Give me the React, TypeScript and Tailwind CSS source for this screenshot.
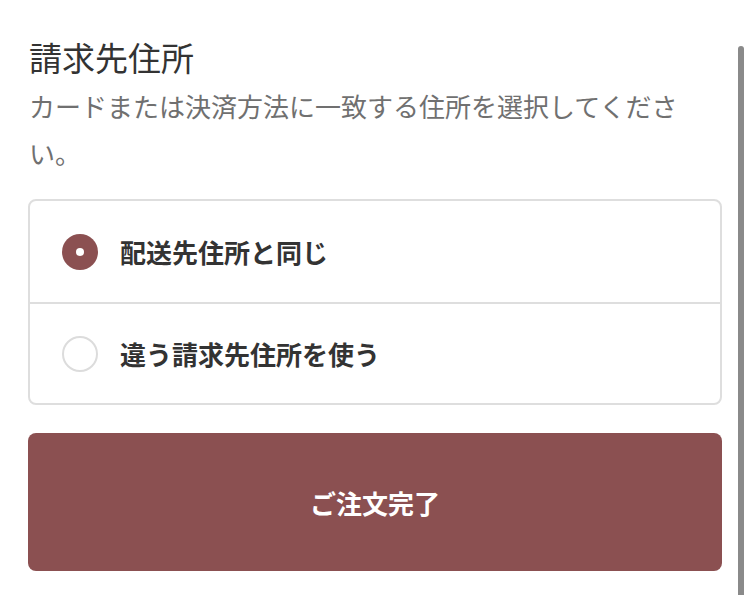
import { useState } from 'react'

const options = [
  { id: 'same', label: '配送先住所と同じ' },
  { id: 'different', label: '違う請求先住所を使う' },
]

export default function App() {
  const [selected, setSelected] = useState('same')

  return (
    <div
      className="relative h-[595px] w-[750px] overflow-hidden bg-white"
      style={{ fontFamily: '"Noto Sans CJK JP", "Noto Sans", sans-serif' }}
    >
      <div className="w-[722px] pl-[28px] pt-[33px]">
        {/* Billing address */}
        <h2 className="pl-[1px] text-[33px] leading-[48px] font-normal text-[#333]">請求先住所</h2>
        <p className="mt-[1px] w-[668px] pl-[1px] text-[26px] leading-[47px] text-[#707070]">
          カードまたは決済方法に一致する住所を選択してください。
        </p>

        <div className="mt-[23px] rounded-[8px] border-2 border-[#dedede]">
          {options.map((opt, i) => (
            <button
              key={opt.id}
              onClick={() => setSelected(opt.id)}
              className={`flex h-[101px] w-full items-center gap-[22px] pl-[32px] text-left ${
                i > 0 ? 'border-t-2 border-[#dedede]' : ''
              }`}
            >
              {selected === opt.id ? (
                <span className="flex h-[36px] w-[36px] items-center justify-center rounded-full bg-[#8b5051]">
                  <span className="h-[8px] w-[8px] rounded-full bg-white" />
                </span>
              ) : (
                <span className="h-[36px] w-[36px] rounded-full border-2 border-[#dcdcdc] bg-white" />
              )}
              <span className="text-[26px] font-bold text-[#333]">{opt.label}</span>
            </button>
          ))}
        </div>

        <button className="mt-[28px] flex h-[138px] w-full items-center justify-center rounded-[8px] bg-[#8b5051] text-[26px] font-bold text-white">
          ご注文完了
        </button>
      </div>

      {/* scroll indicator */}
      <div className="absolute left-[738px] top-[46px] h-[560px] w-[6px] rounded-full bg-[#8a8a8a]" />
    </div>
  )
}
